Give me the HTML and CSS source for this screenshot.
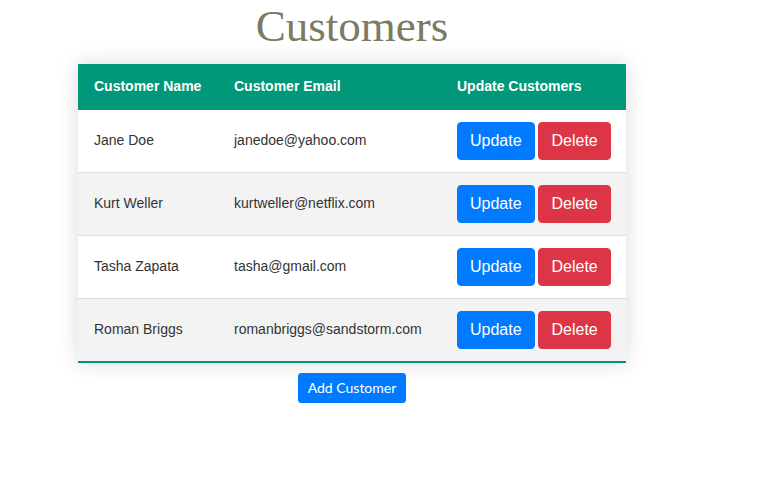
FILE: index.html
```html
<!DOCTYPE html>
<html>
<head>
<meta charset="utf-8">
<link rel="stylesheet" href="styles.css">
</head>
<body>
<div class="wrap">
  <h1 class="title">Customers</h1>
  <table class="styled-table">
    <colgroup><col class="c1"><col class="c2"><col class="c3"></colgroup>
    <thead>
      <tr><th>Customer Name</th><th>Customer Email</th><th>Update Customers</th></tr>
    </thead>
    <tbody>
      <tr><td>Jane Doe</td><td>janedoe@yahoo.com</td><td><button class="btn btn-primary">Update</button> <button class="btn btn-danger">Delete</button></td></tr>
      <tr><td>Kurt Weller</td><td>kurtweller@netflix.com</td><td><button class="btn btn-primary">Update</button> <button class="btn btn-danger">Delete</button></td></tr>
      <tr><td>Tasha Zapata</td><td>tasha@gmail.com</td><td><button class="btn btn-primary">Update</button> <button class="btn btn-danger">Delete</button></td></tr>
      <tr><td>Roman Briggs</td><td>romanbriggs@sandstorm.com</td><td><button class="btn btn-primary">Update</button> <button class="btn btn-danger">Delete</button></td></tr>
    </tbody>
  </table>
  <button class="add-btn">Add Customer</button>
</div>
</body>
</html>
```

FILE: styles.css
```css
body {
  margin: 0;
  background: #fff;
  font-family: "Liberation Sans", Arial, sans-serif;
}
.wrap {
  width: 548px;
  margin-left: 78px;
  padding-top: 3px;
  display: flex;
  flex-direction: column;
  align-items: center;
}
.title {
  margin: 0 0 15px;
  font-family: "Liberation Serif", "Times New Roman", serif;
  font-weight: normal;
  font-size: 45px;
  line-height: 46px;
  height: 46px;
  color: #7b7a62;
}
.styled-table {
  width: 548px;
  border-collapse: collapse;
  table-layout: fixed;
  font-size: 14px;
  color: #333;
  box-shadow: 0 0 20px rgba(0, 0, 0, 0.15);
}
.c1 { width: 140px; }
.c2 { width: 223px; }
.c3 { width: 185px; }
.styled-table thead tr {
  background: #009879;
  color: #fff;
  text-align: left;
}
.styled-table th {
  font-weight: bold;
  padding: 11px 16px 13px;
  line-height: 22px;
  height: 22px;
  white-space: nowrap;
}
.styled-table td {
  padding: 11px 16px 13px;
  line-height: 16px;
  height: 38px;
  white-space: nowrap;
}
.styled-table td:last-child {
  padding-top: 12px;
  padding-bottom: 12px;
}
.styled-table tbody tr {
  border-bottom: 1px solid #dddddd;
}
.styled-table tbody tr:nth-of-type(even) {
  background: #f3f3f3;
}
.styled-table tbody tr:last-of-type {
  border-bottom: 2px solid #009879;
}
.btn {
  font-family: "Liberation Sans", Arial, sans-serif;
  font-size: 16px;
  line-height: 24px;
  padding: 6px 12px;
  border: 1px solid transparent;
  border-radius: 4px;
  color: #fff;
  vertical-align: middle;
  cursor: pointer;
}
.btn-primary { background: #007bff; border-color: #007bff; }
.btn-danger { background: #dc3545; border-color: #dc3545; }
.add-btn {
  margin-top: 10px;
  font-family: Lato, "Open Sans", sans-serif;
  font-size: 14px;
  line-height: 20px;
  padding: 4px 9px;
  border: 1px solid #007bff;
  background: #007bff;
  color: #fff;
  border-radius: 3px;
}
```
